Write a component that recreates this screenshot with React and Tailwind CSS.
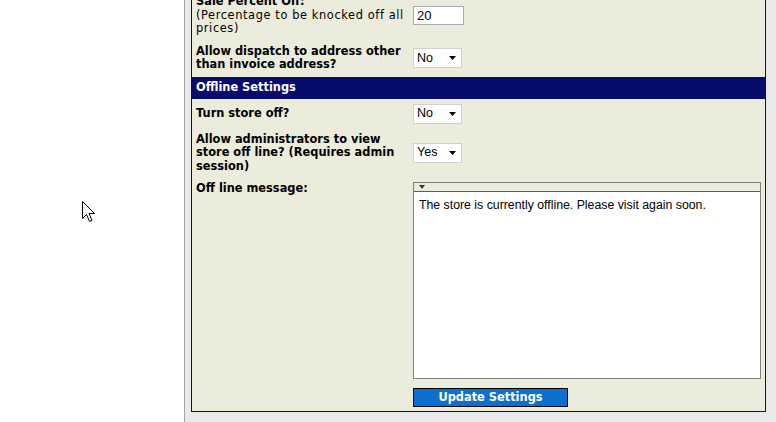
import React from 'react';

const labelText = "font-['DejaVu_Sans',Verdana,sans-serif] text-[11.4px] leading-[13.5px] text-black whitespace-nowrap";

function Select({ value }) {
    return (
        <div className="flex h-[20px] w-[49px] items-center justify-between border border-[#d2d2d2] bg-white pl-[3px] pr-[5px] font-['Liberation_Sans',Arial,sans-serif] text-[12.5px] text-black">
            <span>{value}</span>
            <svg width="7" height="4" viewBox="0 0 7 4">
                <path d="M0 0h7L3.5 4z" fill="#000" />
            </svg>
        </div>
    );
}

function Row({ label, children, top = false }) {
    return (
        <div className={top ? 'grid grid-cols-[216px_1fr] gap-x-px items-start' : 'grid grid-cols-[216px_1fr] gap-x-px items-center'}>
            <div className={`px-[4px] py-[4px] ${labelText}`}>{label}</div>
            <div className="px-[4px] py-[4px]">{children}</div>
        </div>
    );
}

export default function App() {
    return (
        <div className="flex h-screen w-full overflow-hidden bg-white">
            {/* left blank area with mouse pointer */}
            <div className="relative w-[184px] shrink-0 bg-white">
                <svg className="absolute left-[82px] top-[201px]" width="13" height="22" viewBox="0 0 13 22">
                    <path d="M0.5 0.5V17.5L4.5 13.5L7.5 20.5L10 19.5L7 12.5H12.5Z" fill="#fff" stroke="#000" strokeWidth="1" strokeLinejoin="miter" />
                </svg>
            </div>

            {/* grey gutter + settings panel */}
            <div className="flex-1 border-l border-[#a3a3a3] bg-[#e9e9e9] pl-[6px] pr-[10px] pb-[11px]">
                <div className="-mt-[10px] border border-[#070b6b] bg-[#ececdc]">
                    <div className="flex flex-col gap-px">
                        <Row
                            label={
                                <>
                                    <span className="font-bold">Sale Percent Off:</span>
                                    <br />
                                    <span className="tracking-[0.6px]">(Percentage to be knocked off all</span>
                                    <br />
                                    <span className="tracking-[0.6px]">prices)</span>
                                </>
                            }
                        >
                            <div className="flex h-[19px] w-[51px] items-center border border-[#a5acb2] bg-white px-[3px] font-['Liberation_Sans',Arial,sans-serif] text-[13px] text-black">
                                20
                            </div>
                        </Row>

                        <Row
                            label={
                                <span className="font-bold">
                                    Allow dispatch to address other
                                    <br />
                                    than invoice address?
                                </span>
                            }
                        >
                            <Select value="No" />
                        </Row>

                        <div className="flex h-[22px] items-center bg-[#070b6b] px-[4px] font-['DejaVu_Sans',Verdana,sans-serif] text-[11.4px] font-bold text-white">
                            Offline Settings
                        </div>

                        <Row label={<span className="font-bold">Turn store off?</span>}>
                            <Select value="No" />
                        </Row>

                        <Row
                            label={
                                <span className="font-bold">
                                    Allow administrators to view
                                    <br />
                                    store off line? (Requires admin
                                    <br />
                                    session)
                                </span>
                            }
                        >
                            <Select value="Yes" />
                        </Row>

                        <Row top label={<span className="font-bold">Off line message:</span>}>
                            <div className="flex h-[197px] flex-col border border-[#808080] bg-white">
                                <div className="flex h-[9px] items-center border-b border-[#5c5c5c] bg-[#ececdc] pl-[5px]">
                                    <svg width="6" height="4" viewBox="0 0 6 4">
                                        <path d="M0 0h6L3 4z" fill="#3f3528" />
                                    </svg>
                                </div>
                                <div className="flex-1 px-[5px] pt-[6px] font-['Liberation_Sans',Arial,sans-serif] text-[12.3px] leading-[14px] text-black">
                                    The store is currently offline. Please visit again soon.
                                </div>
                            </div>
                        </Row>

                        <Row label={null}>
                            <button className="flex h-[19px] w-[155px] items-center justify-center border border-black bg-[#0d6fd0] font-['DejaVu_Sans',Verdana,sans-serif] text-[11.4px] font-bold text-white">
                                Update Settings
                            </button>
                        </Row>
                    </div>
                </div>
            </div>
        </div>
    );
}
